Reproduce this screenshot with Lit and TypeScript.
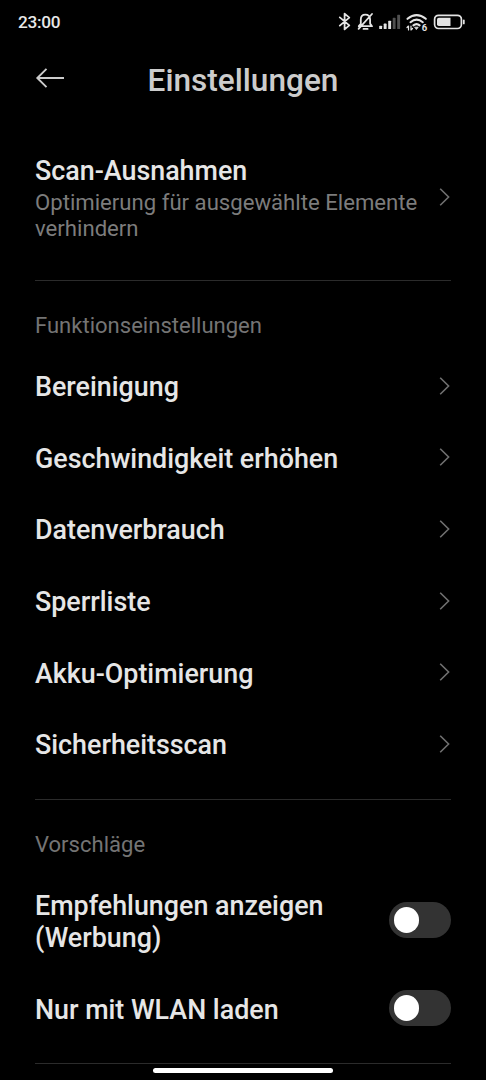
import { LitElement, html, css } from "lit";
import { customElement, property } from "lit/decorators.js";

@customElement("status-icons")
class StatusIcons extends LitElement {
  static styles = css`
    :host { display: block; width: 130px; height: 24px; }
    svg { display: block; }
    .tiny { font: 700 9.5px Roboto, sans-serif; }
  `;
  render() {
    return html`<svg width="130" height="24" viewBox="336 10 130 24" fill="none" stroke="#e4e4e4" stroke-linecap="round" stroke-linejoin="round">
      <path stroke-width="1.8" d="M339.8 17.4L349.3 25.4L344.6 29.4V13.6L349.3 17.6L339.8 25.6"/>
      <path stroke-width="1.8" d="M358.8 26.2H372L370.1 23.6V19.4C370.1 16.3 368.2 14.7 365.4 14.7S360.8 16.3 360.8 19.4V23.8L358.8 26.2M363.5 28.9H367.6M372 14L358.6 28.8"/>
      <g stroke="none" fill="#e4e4e4">
        <rect x="379.2" y="25.7" width="2.9" height="3.3" rx=".6"/>
        <rect x="383.7" y="23.6" width="2.9" height="5.4" rx=".6"/>
        <rect x="388.2" y="20.7" width="2.9" height="8.3" rx=".6"/>
        <rect x="392.7" y="17.8" width="2.9" height="11.2" rx=".6" fill="#505050"/>
        <rect x="397.2" y="14.8" width="2.9" height="14.2" rx=".6" fill="#505050"/>
      </g>
      <g stroke-width="2.1">
        <path d="M407.5 18.8Q416.6 11.4 425.8 18.8"/>
        <path d="M410.5 22.2Q416.6 17.2 422.8 22.2"/>
        <path d="M413.4 25.4Q416.6 22.8 419.6 25.4"/>
      </g>
      <path d="M415 27.2H418.2L416.6 29.3Z" fill="#e4e4e4" stroke-width=".8"/>
      <path stroke-width="1.2" d="M408.5 30V26L407 27.5M411 26V30L412.5 28.5"/>
      <text class="tiny" x="421.8" y="31" fill="#e4e4e4" stroke="none">6</text>
      <rect x="434.6" y="15.3" width="26.8" height="13.2" rx="4" stroke-width="1.7"/>
      <path d="M438.8 17.7H450.5V26.1H438.8Q437 26.1 437 24.3V19.5Q437 17.7 438.8 17.7Z" fill="#e4e4e4" stroke="none"/>
      <path d="M463.8 20.4V23.4" stroke-width="1.8"/>
    </svg>`;
  }
}

@customElement("settings-row")
class SettingsRow extends LitElement {
  @property() heading = "";
  @property() detail = "";
  @property({ type: Boolean }) toggle = false;
  static styles = css`
    :host { display: flex; align-items: center; justify-content: space-between; padding: 19.8px 0; }
    .copy { display: flex; flex-direction: column; padding-top: 3px; }
    .detailed { padding: 2px 0 0.4px; }
    .heading { font-size: 26.85px; font-weight: 500; line-height: 32px; color: #e6e6e6; white-space: pre-line; }
    .detail { margin-top: 2.6px; font-size: 22.15px; line-height: 26px; color: #7c7c7c; white-space: pre-line; }
    .chevron { flex: none; display: block; width: 12px; height: 20px; }
    .switch { flex: none; box-sizing: border-box; width: 62px; height: 36px; padding: 5px 4.5px; border-radius: 18px; background: #333; }
    .knob { width: 25.5px; height: 25.5px; border-radius: 50%; background: #fff; }
  `;
  render() {
    return html`<div class="copy ${this.detail ? "detailed" : ""}">
        <div class="heading">${this.heading}</div>
        ${this.detail ? html`<div class="detail">${this.detail}</div>` : ""}
      </div>
      ${this.toggle
        ? html`<div class="switch"><div class="knob"></div></div>`
        : html`<svg class="chevron" viewBox="0 0 12 20" fill="none" stroke="#707070" stroke-width="1.6"><path d="M1.2 1.7L9.6 10L1.2 18.3"/></svg>`}`;
  }
}

@customElement("app-root")
class AppRoot extends LitElement {
  static styles = css`
    :host { display: flex; flex-direction: column; position: relative; box-sizing: border-box; height: 1080px; overflow: hidden; background: #000; font-family: Roboto, sans-serif; }
    .status { display: flex; align-items: center; justify-content: space-between; height: 44px; padding: 0 20px 0 18px; }
    .time { font-size: 17.2px; font-weight: 500; letter-spacing: -0.25px; color: #e8e8e8; line-height: 22px; }
    .header { display: grid; grid-template-columns: 60px 1fr 60px; align-items: center; height: 68px; padding: 0 35px; }
    .back { display: block; }
    .title { margin: 5px 0 0; text-align: center; font-size: 31.6px; font-weight: 500; line-height: 38px; color: #ccc; }
    .content { padding: 21px 35px 0; display: flex; flex-direction: column; }
    .rule { height: 1px; background: #2b2b2b; }
    .first { margin-bottom: 18px; }
    .group { padding-top: 32.2px; }
    .label { font-size: 22.05px; line-height: 26px; color: #747474; }
    .features { padding-bottom: 19px; }
    .features .label { margin-bottom: 11.2px; }
    .row { padding: 18.3px 0; }
    .options { padding-bottom: 17px; }
    .options .label { margin-bottom: 9.4px; }
    .pair { padding-bottom: 16.7px; }
    .handle { position: absolute; left: 153px; bottom: 7px; width: 180px; height: 5px; border-radius: 3px; background: #fff; }
  `;
  render() {
    const features = ["Bereinigung", "Geschwindigkeit erhöhen", "Datenverbrauch", "Sperrliste", "Akku-Optimierung", "Sicherheitsscan"];
    return html`
      <div class="status"><span class="time">23:00</span><status-icons></status-icons></div>
      <div class="header">
        <svg class="back" width="30" height="24" viewBox="0 0 30 24" fill="none" stroke="#ccc" stroke-width="1.9"><path d="M29 12H2.5M11.5 2.8L2.3 12L11.5 21.2"/></svg>
        <h1 class="title">Einstellungen</h1>
      </div>
      <div class="content">
        <settings-row class="first" heading="Scan-Ausnahmen" .detail=${"Optimierung für ausgewählte Elemente\nverhindern"}></settings-row>
        <div class="rule"></div>
        <div class="group features">
          <div class="label">Funktionseinstellungen</div>
          ${features.map((f) => html`<settings-row class="row" .heading=${f}></settings-row>`)}
        </div>
        <div class="rule"></div>
        <div class="group options">
          <div class="label">Vorschläge</div>
          <settings-row class="pair" toggle .heading=${"Empfehlungen anzeigen\n(Werbung)"}></settings-row>
          <settings-row toggle heading="Nur mit WLAN laden"></settings-row>
        </div>
        <div class="rule"></div>
      </div>
      <div class="handle"></div>`;
  }
}
